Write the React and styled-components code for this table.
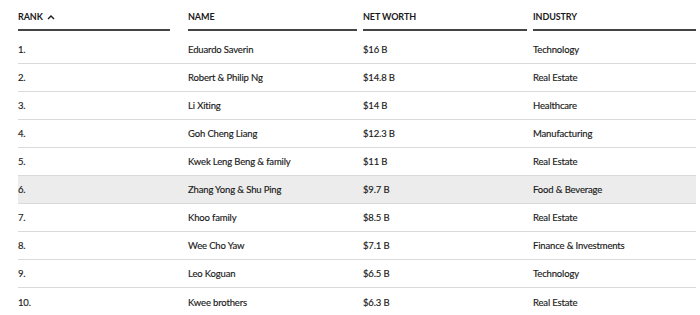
import React from 'react';
import styled, { createGlobalStyle } from 'styled-components';

const GlobalStyle = createGlobalStyle`
  body {
    margin: 0;
    background: #fff;
    font-family: 'Lato', 'Liberation Sans', sans-serif;
    color: #1a1a1a;
  }
`

const columns = [
  { key: 'rank', label: 'RANK', width: 170, gap: 18, sorted: true },
  { key: 'name', label: 'NAME', width: 175, gap: 6 },
  { key: 'worth', label: 'NET WORTH', width: 170, gap: 6 },
  { key: 'industry', label: 'INDUSTRY', width: 163, gap: 0 },
]

const rows = [
  { rank: '1.', name: 'Eduardo Saverin', worth: '$16 B', industry: 'Technology' },
  { rank: '2.', name: 'Robert & Philip Ng', worth: '$14.8 B', industry: 'Real Estate' },
  { rank: '3.', name: 'Li Xiting', worth: '$14 B', industry: 'Healthcare' },
  { rank: '4.', name: 'Goh Cheng Liang', worth: '$12.3 B', industry: 'Manufacturing' },
  { rank: '5.', name: 'Kwek Leng Beng & family', worth: '$11 B', industry: 'Real Estate' },
  { rank: '6.', name: 'Zhang Yong & Shu Ping', worth: '$9.7 B', industry: 'Food & Beverage', hover: true },
  { rank: '7.', name: 'Khoo family', worth: '$8.5 B', industry: 'Real Estate' },
  { rank: '8.', name: 'Wee Cho Yaw', worth: '$7.1 B', industry: 'Finance & Investments' },
  { rank: '9.', name: 'Leo Koguan', worth: '$6.5 B', industry: 'Technology' },
  { rank: '10.', name: 'Kwee brothers', worth: '$6.3 B', industry: 'Real Estate' },
]

const template = columns.map(c => `${c.width}px`).join(' ')

const Table = styled.div`
  width: 678px;
  margin-left: 18px;
`

const HeadRow = styled.div`
  display: grid;
  grid-template-columns: ${template};
  margin-bottom: 5px;
`

const HeadCell = styled.div`
  display: flex;
  align-items: center;
  gap: 4px;
  margin-right: ${p => p.$gap}px;
  padding: 11px 0 6px;
  line-height: 12px;
  font-size: 9px;
  font-weight: 700;
  letter-spacing: -0.1px;
  border-bottom: 2px solid #444;
`

const Row = styled.div`
  display: grid;
  grid-template-columns: ${template};
  align-items: center;
  height: 28px;
  box-sizing: border-box;
  border-bottom: 1px solid #dadada;
  background: ${p => (p.$hover ? '#ececec' : 'transparent')};
  &:last-child {
    border-bottom: none;
  }
`

const Cell = styled.div`
  font-size: 9.5px;
  letter-spacing: -0.15px;
  white-space: nowrap;
  -webkit-text-stroke: 0.15px #1a1a1a;
`

const Chevron = () => (
  <svg width="8" height="6" viewBox="0 0 8 6" fill="none">
    <path d="M1 5 L4 2 L7 5" stroke="#1a1a1a" strokeWidth="1.4" />
  </svg>
)

const App = () => {
  return (
    <>
      <GlobalStyle />
      <Table>
        <HeadRow>
          {columns.map(c => (
            <HeadCell key={c.key} $gap={c.gap}>
              {c.label}
              {c.sorted && <Chevron />}
            </HeadCell>
          ))}
        </HeadRow>
        {rows.map(r => (
          <Row key={r.rank} $hover={r.hover}>
            {columns.map(c => (
              <Cell key={c.key}>{r[c.key]}</Cell>
            ))}
          </Row>
        ))}
      </Table>
    </>
  )
}

export default App
